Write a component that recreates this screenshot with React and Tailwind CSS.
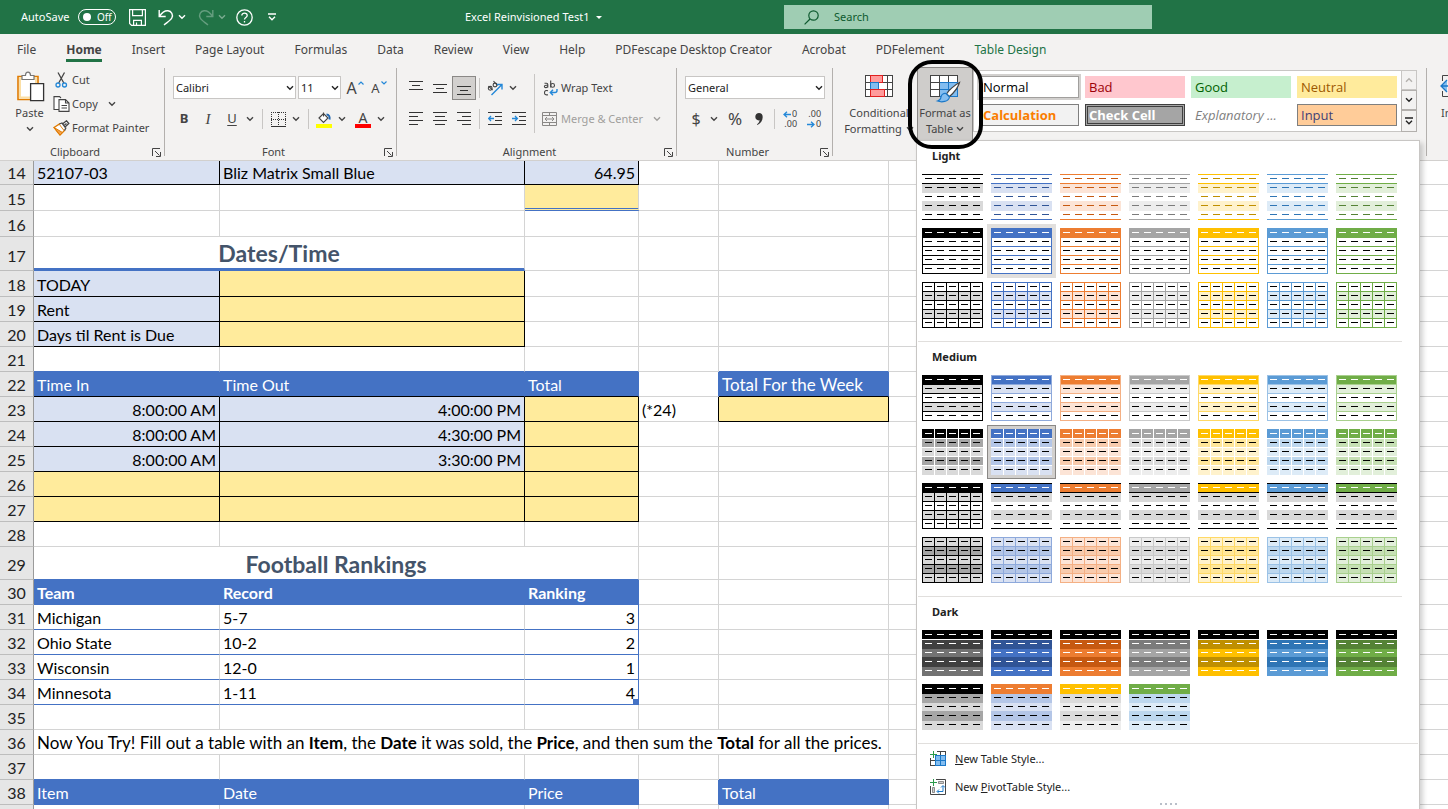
import React from "react";
import clsx from "clsx";

/* ---------- small shared pieces ---------- */

function Chevron({ className }) {
  return (
    <svg viewBox="0 0 8 6" className={clsx("h-[6px] w-2 shrink-0", className)} fill="none" stroke="currentColor" strokeWidth="1.4" aria-hidden="true">
      <path d="M1 1.2 4 4.2 7 1.2" />
    </svg>
  );
}

function IconButton({ label, active, className, children }) {
  return (
    <button
      type="button"
      aria-label={label}
      className={clsx(
        "flex h-6 w-6 shrink-0 items-center justify-center",
        active && "border border-[#8a8886] bg-[#d2d0ce]",
        className
      )}
    >
      {children}
    </button>
  );
}

function DropButton({ label, className }) {
  return (
    <button type="button" aria-label={label} className={clsx("flex h-6 w-3 shrink-0 items-center justify-center", className)}>
      <Chevron />
    </button>
  );
}

function Divider() {
  return <div className="mx-[3px] h-5 w-px shrink-0 self-center bg-[#c8c6c4]" />;
}

function Picker({ label, value, className }) {
  return (
    <div className={clsx("relative shrink-0", className)}>
      <select
        aria-label={label}
        defaultValue={value}
        className="block h-[23px] w-full appearance-none border border-[#c8c6c4] bg-white pl-[2px] text-[11px] leading-none text-[#222]"
      >
        <option>{value}</option>
      </select>
      <Chevron className="pointer-events-none absolute top-[9px] right-[2px] text-[#222]" />
    </div>
  );
}

function Group({ title, width, launcher = true, children }) {
  return (
    <section aria-label={title} className={clsx("flex shrink-0", width)}>
      <div className="flex min-w-0 grow flex-col">
        <div className="flex h-[78px] items-start">{children}</div>
        <div className="flex h-4 items-center">
          <span className="grow text-center text-[11px]">{title}</span>
          {launcher && (
            <button type="button" aria-label={title + " settings"} className="mr-[2px] flex h-3 w-3 items-center justify-center">
              <svg viewBox="0 0 9 9" className="h-[9px] w-[9px]" fill="none" stroke="#444" strokeWidth="1" aria-hidden="true">
                <path d="M.5 8V.5H8M3 3l4.5 4.5M8.5 4v4.5H4" />
              </svg>
            </button>
          )}
        </div>
      </div>
      <div className="mt-[2px] h-[88px] w-px bg-[#b3b0ad]" />
    </section>
  );
}

/* ---------- title bar ---------- */

function TitleBar() {
  return (
    <header className="flex h-[34px] shrink-0 items-center bg-[#217346] text-[11px] text-white">
      <div className="flex w-[465px] shrink-0 items-center">
        <span className="w-[57px] pl-[21px] whitespace-nowrap" id="autosave">AutoSave</span>
        <button
          type="button"
          role="switch"
          aria-checked="false"
          aria-labelledby="autosave"
          className="ml-[21px] flex h-4 w-[38px] items-center rounded-full border border-white pl-1"
        >
          <span className="h-2 w-2 rounded-full bg-white" />
          <span className="pl-[6px] text-[10px] leading-none">Off</span>
        </button>
        <button type="button" aria-label="Save" className="ml-[13px]">
          <svg viewBox="0 0 17 17" className="h-[17px] w-[17px]" fill="none" stroke="white" strokeWidth="1.2" aria-hidden="true">
            <path d="M.6.6h15.8v15.8H2.6l-2-2zM3.6.6v6h9.8v-6M4.6 16.4v-5h7.8v5M7.5 16v-2.500" />
          </svg>
        </button>
        <button type="button" aria-label="Undo" className="ml-3">
          <svg viewBox="0 0 16 17" className="h-[17px] w-4" fill="none" stroke="white" strokeWidth="1.4" aria-hidden="true">
            <path d="M1.200 1v6.500h6.500M1.500 7.200C4 3.500 7 1.500 10 1.800c3.500.3 5.500 4 3.800 7.200-1 2-3.500 3.500-7.800 7" />
          </svg>
        </button>
        <Chevron className="ml-1" />
        <button type="button" aria-label="Redo" className="ml-3 opacity-30">
          <svg viewBox="0 0 16 17" className="h-[17px] w-4" fill="none" stroke="white" strokeWidth="1.4" aria-hidden="true">
            <path d="M14.800 1v6.500H8.300M14.500 7.200C12 3.500 9 1.500 6 1.800 2.500 2.100.5 5.800 2.200 9c1 2 3.500 3.500 7.800 7" />
          </svg>
        </button>
        <Chevron className="ml-1 opacity-40" />
        <button type="button" aria-label="Help" className="ml-[10px]">
          <svg viewBox="0 0 17 17" className="h-[17px] w-[17px]" fill="none" stroke="white" strokeWidth="1.3" aria-hidden="true">
            <circle cx="8.500" cy="8.500" r="7.700" />
            <path d="M5.800 6.600c0-3.400 5.400-3.400 5.400 0 0 2-2.700 2-2.700 4M8.500 12v1.600" />
          </svg>
        </button>
        <button type="button" aria-label="Customize quick access" className="ml-[15px]">
          <svg viewBox="0 0 8 8" className="h-2 w-2" fill="none" stroke="white" strokeWidth="1.300" aria-hidden="true">
            <path d="M0 1h8M1 3.800l3 3 3-3" />
          </svg>
        </button>
      </div>
      <button type="button" className="flex w-[319px] shrink-0 items-center gap-[7px] text-[11px]">
        Excel Reinvisioned Test1
        <span className="border-x-[3px] border-t-[3px] border-x-transparent border-t-white" />
      </button>
      <label className="flex h-6 w-[368px] items-center bg-[#9fcdb3] pl-5 text-[#0e5a2f]">
        <svg viewBox="0 0 15 15" className="h-[15px] w-[15px] shrink-0" fill="none" stroke="currentColor" strokeWidth="1.2" aria-hidden="true">
          <circle cx="9.500" cy="5.500" r="4.700" />
          <path d="M6 9 .6 14.400" />
        </svg>
        <input
          type="search"
          aria-label="Search"
          placeholder="Search"
          className="ml-[15px] min-w-0 grow bg-transparent text-[11px] outline-none placeholder:text-[#0e5a2f]"
        />
      </label>
    </header>
  );
}

/* ---------- ribbon tabs ---------- */

const tabs = [
  "File", "Home", "Insert", "Page Layout", "Formulas", "Data", "Review", "View", "Help",
  "PDFescape Desktop Creator", "Acrobat", "PDFelement", "Table Design",
];

function Tabs() {
  return (
    <nav className="flex h-8 shrink-0 gap-[30px] pl-[17px] text-[12px] text-[#444]">
      {tabs.map((t) => (
        <a
          key={t}
          href="#"
          className={clsx(
            "flex h-7 items-center border-b-[3px] pt-[6px] whitespace-nowrap",
            t === "Home" ? "border-[#217346] font-bold" : "border-transparent",
            t === "Table Design" && "text-[#217346]"
          )}
        >
          {t}
        </a>
      ))}
    </nav>
  );
}

/* ---------- ribbon groups ---------- */

function Clipboard() {
  return (
    <Group title="Clipboard" width="w-[165px]">
      <button type="button" className="flex w-[45px] shrink-0 flex-col items-center pt-[5px] pl-[14px] text-[11px]">
        <svg viewBox="0 0 28 31" className="ml-[3px] h-[31px] w-7 shrink-0" fill="none" aria-hidden="true">
          <path d="M1 5.500h20v23H1z" fill="#fff" stroke="#e07b00" strokeWidth="1.600" />
          <path d="M3 7.500h16v19H3z" stroke="#fbdfa5" strokeWidth="2" />
          <path d="M5 8.500V4.500h3.500c0-4.500 5-4.500 5 0H17v4z" fill="#fff" stroke="#767676" strokeWidth="1.200" />
          <path d="M13.600 12.600h13v17h-13z" fill="#fff" stroke="#333" strokeWidth="1.300" />
        </svg>
        <span className="mt-[3px] leading-4">Paste</span>
        <Chevron className="mt-[5px]" />
      </button>
      <div className="ml-[8px] flex flex-col pt-[2px] text-[11px]">
        <button type="button" className="flex h-6 items-center">
          <svg viewBox="0 0 18 16" className="h-4 w-[18px] shrink-0" fill="none" aria-hidden="true">
            <path d="M5 .5l5.800 10.500M11.500.5 5.700 11" stroke="#444" strokeWidth="1.300" />
            <circle cx="5" cy="13" r="2" stroke="#2488d8" strokeWidth="1.300" />
            <circle cx="11.500" cy="13" r="2" stroke="#2488d8" strokeWidth="1.300" />
          </svg>
          <span className="pl-px">Cut</span>
        </button>
        <button type="button" className="flex h-6 items-center">
          <svg viewBox="0 0 18 16" className="h-4 w-[18px] shrink-0" fill="#fff" stroke="#444" strokeWidth="1.100" aria-hidden="true">
            <path d="M6 13.500H1V.6h5.500L8 2" />
            <path d="M6 3.600h6.500L16 7v8.400H6zM12.500 3.600V7H16M8.500 9.500H14M8.500 12H14" />
          </svg>
          <span className="pl-px">Copy</span>
          <Chevron className="ml-[10px]" />
        </button>
        <button type="button" className="flex h-6 items-center whitespace-nowrap">
          <svg viewBox="0 0 18 16" className="h-4 w-[18px] shrink-0" fill="none" aria-hidden="true">
            <path d="M1 7.500 6.500 4l5 6.500L7 15z" fill="#fff" stroke="#e07b00" strokeWidth="1.400" />
            <path d="M1 7.500l8.500 5L7 15z" fill="#f5a04a" stroke="#e07b00" />
            <path d="M6.500 4 9 3l3.800 5-1.300 2.500M9.500 4 13.500.8 15.800 3.500 12 7M13.500 3.500 11.500 5" stroke="#444" strokeWidth="1.300" fill="#fff" />
          </svg>
          <span className="pl-px">Format Painter</span>
        </button>
      </div>
    </Group>
  );
}

function FontGroup() {
  return (
    <Group title="Font" width="w-[232px]">
      <div className="flex flex-col gap-[7px] pt-[10px] pl-2">
        <div className="flex h-6 gap-[2px]">
          <Picker label="Font" value="Calibri" className="w-[123px]" />
          <Picker label="Font size" value="11" className="w-[43px]" />
          <div className="flex">
            <IconButton label="Increase font size" className="gap-px">
              <span className="text-[16px] leading-none">A</span>
              <svg viewBox="0 0 6 4" className="mb-[10px] h-1 w-[6px]" fill="none" stroke="#2488d8" strokeWidth="1.200" aria-hidden="true"><path d="M.5 3.500 3 1l2.500 2.500" /></svg>
            </IconButton>
            <IconButton label="Decrease font size" className="gap-px">
              <span className="text-[13px] leading-none">A</span>
              <svg viewBox="0 0 6 4" className="mb-[10px] h-1 w-[6px]" fill="none" stroke="#2488d8" strokeWidth="1.200" aria-hidden="true"><path d="M.5.5 3 3 5.500.5" /></svg>
            </IconButton>
          </div>
        </div>
        <div className="-ml-px flex h-6 text-[13px]">
          <IconButton label="Bold"><b>B</b></IconButton>
          <IconButton label="Italic"><i className="font-['Liberation_Serif',serif] text-[15px]">I</i></IconButton>
          <IconButton label="Underline"><u className="underline-offset-2">U</u></IconButton>
          <DropButton label="Underline style" />
          <div className="w-[3px]" />
          <Divider />
          <IconButton label="Borders">
            <svg viewBox="0 0 15 15" className="h-[15px] w-[15px]" stroke="#333" strokeWidth="1" shapeRendering="crispEdges" aria-hidden="true">
              <path d="M0 .5h15M0 7.500h15M.5 0v14M7.500 0v14M14.500 0v14" strokeDasharray="1 1" />
              <path d="M0 14.500h15" />
            </svg>
          </IconButton>
          <DropButton label="Border style" />
          <div className="w-[3px]" />
          <Divider />
          <IconButton label="Fill color">
            <svg viewBox="0 0 16 17" className="h-[17px] w-4" fill="none" aria-hidden="true">
              <path d="M3 7 7.500 2.500l4.500 4.500-4.500 4.500zM7.500 5.500V1.500" fill="#fff" stroke="#444" strokeWidth="1.100" />
              <path d="M10.500 3.500c2.500 0 3.500 2 3 5" stroke="#1f66b0" strokeWidth="2" />
              <path d="M0 13h16v4H0z" fill="#ff0" />
            </svg>
          </IconButton>
          <DropButton label="Fill color list" />
          <div className="w-[3px]" />
          <IconButton label="Font color">
            <span className="flex w-4 flex-col items-center border-b-4 border-[#f00] text-[14px] leading-[13px]">A</span>
          </IconButton>
          <DropButton label="Font color list" />
        </div>
      </div>
    </Group>
  );
}

function Lines({ d }) {
  return (
    <svg viewBox="0 0 14 14" className="h-[14px] w-[14px]" stroke="#333" strokeWidth="1" shapeRendering="crispEdges" aria-hidden="true">
      <path d={d} />
    </svg>
  );
}

function Alignment() {
  return (
    <Group title="Alignment" width="w-[280px]">
      <div className="flex flex-col gap-[7px] pt-[10px] pl-[7px]">
        <div className="flex h-6">
          <IconButton label="Top align"><Lines d="M0 .5h14M3 4.500h8M0 8.500h14" /></IconButton>
          <IconButton label="Middle align"><Lines d="M0 3.500h14M3 7.500h8M0 11.500h14" /></IconButton>
          <IconButton label="Bottom align" active><Lines d="M0 5.500h14M3 9.500h8M0 13.500h14" /></IconButton>
          <Divider />
          <IconButton label="Orientation">
            <svg viewBox="0 0 18 16" className="h-4 w-[18px] shrink-0" fill="none" aria-hidden="true">
              <g stroke="#444" strokeWidth="1.100">
                <circle cx="4.200" cy="8.300" r="1.900" />
                <path d="M2.500 6.200 6.600 10M7.500 1.200l4 4.300" />
                <circle cx="9" cy="5" r="1.900" />
              </g>
              <path d="M5.500 15 15.500 5M11 4.500h5v5" stroke="#2488d8" strokeWidth="1.400" />
            </svg>
          </IconButton>
          <DropButton label="Orientation list" />
        </div>
        <div className="flex h-6">
          <IconButton label="Align left"><Lines d="M0 .5h14M0 4.500h9M0 8.500h14M0 12.500h9" /></IconButton>
          <IconButton label="Center"><Lines d="M0 .5h14M2 4.500h10M0 8.500h14M2 12.500h10" /></IconButton>
          <IconButton label="Align right"><Lines d="M0 .5h14M5 4.500h9M0 8.500h14M5 12.500h9" /></IconButton>
          <Divider />
          <IconButton label="Decrease indent">
            <svg viewBox="0 0 14 14" className="h-[14px] w-[14px]" fill="none" aria-hidden="true">
              <path d="M0 .5h14M7 4.500h7M7 8.500h7M0 12.500h14" stroke="#333" shapeRendering="crispEdges" />
              <path d="M6 6.500H.8M3 4 .6 6.500 3 9" stroke="#2488d8" strokeWidth="1.300" />
            </svg>
          </IconButton>
          <IconButton label="Increase indent">
            <svg viewBox="0 0 14 14" className="h-[14px] w-[14px]" fill="none" aria-hidden="true">
              <path d="M0 .5h14M7 4.500h7M7 8.500h7M0 12.500h14" stroke="#333" shapeRendering="crispEdges" />
              <path d="M0 6.500h5.200M3 4l2.400 2.500L3 9" stroke="#2488d8" strokeWidth="1.300" />
            </svg>
          </IconButton>
        </div>
      </div>
      <div className="mt-2 mr-[7px] ml-[3px] h-[59px] w-px bg-[#c8c6c4]" />
      <div className="flex flex-col gap-[7px] pt-[10px] text-[11px] whitespace-nowrap">
        <button type="button" className="flex h-6 items-center gap-px">
          <svg viewBox="0 0 18 16" className="h-4 w-[18px] shrink-0" fill="none" aria-hidden="true">
            <g stroke="#444" strokeWidth="1.100">
              <path d="M2.500 3.200h2q1.300 0 1.300 1.300v3M5.800 5.300H4q-1.600 0-1.600 1.200T4 7.600q1.600 0 1.800-1.500M8.700.5v7" />
              <circle cx="10.600" cy="5.400" r="1.900" />
              <path d="M6 10.700q-3.500-.8-3.500 2T6 14.700" />
            </g>
            <path d="M15 9v1.500q0 2-2 2H8.500M11 9.800l-2.700 2.700 2.700 2.700" stroke="#2488d8" strokeWidth="1.400" />
          </svg>
          <span>Wrap Text</span>
        </button>
        <button type="button" className="flex h-6 items-center gap-px text-[#a19f9d]">
          <svg viewBox="0 0 18 16" className="h-4 w-[18px] shrink-0" fill="none" stroke="#8a8886" aria-hidden="true">
            <path d="M.5 1.500h14v13H.500zM.5 4.500h14M.5 11.500h14M7.500 1.500v3M7.500 11.500v3" />
            <path d="M3 8h9M5 6 3 8l2 2M10 6l2 2-2 2" />
          </svg>
          <span>Merge &amp; Center</span>
          <Chevron className="ml-[9px]" />
        </button>
      </div>
    </Group>
  );
}

function Decimals({ increase }) {
  const arrow = (
    <svg viewBox="0 0 8 7" className="h-[7px] w-2" fill="none" stroke="#2488d8" strokeWidth="1.300" aria-hidden="true">
      <path d={increase ? "M8 3.500H1M4 .7 1 3.500l3 2.800" : "M0 3.500h7M4 .7l3 2.800-3 2.800"} />
    </svg>
  );
  const zero = <span className="flex items-center justify-end gap-px">{arrow}0</span>;
  const zeros = <span className="text-right">.00</span>;
  return (
    <span className="flex flex-col text-[9px] leading-[10px]">
      {increase ? zero : zeros}
      {increase ? zeros : zero}
    </span>
  );
}

function NumberGroup() {
  return (
    <Group title="Number" width="w-[156px]">
      <div className="flex flex-col gap-[7px] pt-[10px] pl-[7px]">
        <div className="flex h-6 pl-px">
          <Picker label="Number format" value="General" className="w-[140px]" />
        </div>
        <div className="flex h-6">
          <IconButton label="Accounting format"><span className="text-[16px]">$</span></IconButton>
          <DropButton label="Accounting list" />
          <IconButton label="Percent style" className="ml-[3px]"><span className="text-[17px]">%</span></IconButton>
          <IconButton label="Comma style">
            <svg viewBox="0 0 8 12" className="h-3 w-2" fill="#333" aria-hidden="true">
              <path d="M4 0c2.300 0 3.700 1.500 3.700 4 0 3.500-2 6.500-5.200 8L2 11.300C3.500 10.300 4.500 8.800 4.600 7.300 2 7.800.3 6 .3 3.800.3 1.500 2 0 4 0z" />
            </svg>
          </IconButton>
          <Divider />
          <IconButton label="Increase decimal"><Decimals increase /></IconButton>
          <IconButton label="Decrease decimal"><Decimals /></IconButton>
        </div>
      </div>
    </Group>
  );
}

const cellStyles = [
  ["Normal", "border border-[#a19f9d] bg-white text-black outline-2 outline-[#d2d0ce]"],
  ["Bad", "border border-transparent bg-[#ffc7ce] text-[#9c0006]"],
  ["Good", "border border-transparent bg-[#c6efce] text-[#006100]"],
  ["Neutral", "border border-transparent bg-[#ffeb9c] text-[#9c5700]"],
  ["Calculation", "border border-[#7f7f7f] bg-[#f2f2f2] font-bold text-[#fa7d00]"],
  ["Check Cell", "border-3 border-double border-[#3f3f3f] bg-[#a5a5a5] pl-px! font-bold text-white"],
  ["Explanatory ...", "border border-transparent bg-white text-[#7f7f7f] italic"],
  ["Input", "border border-[#7f7f7f] bg-[#ffcc99] text-[#3f3f76]"],
];

function Styles() {
  return (
    <section aria-label="Styles" className="flex shrink-0">
      <div className="flex h-[78px] items-start pl-2">
        <button type="button" className="flex w-[76px] flex-col items-center pt-[9px] text-[11px] leading-4 whitespace-nowrap">
          <svg viewBox="0 0 28 22" className="mb-2 h-[22px] w-7 shrink-0" aria-hidden="true" shapeRendering="crispEdges">
            <path d="M.5.5h27v21H.5z" fill="#fff" stroke="#444" />
            <path d="M0 7.500h28M0 14.500h28M5.500 0v22M22.500 0v22" stroke="#444" />
            <path d="M5.500.5h12v7h-12z" fill="#ff9b9b" stroke="#e02020" />
            <path d="M5.500 7.500h8v7h-8z" fill="#83bdf0" stroke="#1b78c8" />
            <path d="M5.500 14.500h14v7h-14z" fill="#ff9b9b" stroke="#e02020" />
          </svg>
          <span>Conditional</span>
          <span className="flex items-center gap-1">Formatting <Chevron /></span>
        </button>
        <div className="relative w-14 shrink-0 pt-px">
          <button
            type="button"
            aria-haspopup="menu"
            aria-expanded="true"
            className="flex h-[74px] w-14 flex-col items-center border border-[#8a8886] bg-[#cfcdcb] pt-[7px] text-[11px] leading-4 whitespace-nowrap"
          >
            <svg viewBox="0 0 31 28" className="mb-[2px] h-7 w-[31px] shrink-0" fill="none" aria-hidden="true">
              <g shapeRendering="crispEdges">
                <path d="M.5.5h27v21H.5z" fill="#fff" stroke="#444" />
                <path d="M10 8h17v13H10z" fill="#83bdf0" />
                <path d="M0 7.500h28M0 14.500h10M9.500 0v22M18.500 0v8" stroke="#444" />
                <path d="M10 14.500h17M18.500 8v13M10 7.500h18M27.500 8v14M10 21.500h18" stroke="#1b78c8" />
              </g>
              <path d="M29.500 7.500c-5 2.500-11 8-13 11.500l3 2.500c3.500-3 8.500-9 10-14z" fill="#fff" stroke="#444" strokeWidth="1.200" />
              <path d="M16 18.500c-2.500-.5-4.500 1-5 3.500-.3 2-1.500 3.500-3.500 4 4 1.500 11 1 12-4z" fill="#83bdf0" stroke="#1b78c8" strokeWidth="1.200" />
            </svg>
            <span>Format as</span>
            <span className="flex items-center gap-[3px]">Table <Chevron /></span>
          </button>
          <TableStyleMenu />
          <div className="pointer-events-none absolute -top-[6px] -left-[9px] z-30 h-[89px] w-[75px] rounded-[24px] border-4 border-black" />
        </div>
        <div className="mt-1 flex h-[62px] border border-[#c8c6c4] bg-white">
          <div className="grid grid-cols-4 gap-[6px] py-[5px] pr-1 pl-[5px]">
            {cellStyles.map(([name, look]) => (
              <button
                key={name}
                type="button"
                className={clsx("flex h-[22px] w-[100px] items-center pl-[3px] font-['Open_Sans',sans-serif] text-[13px] leading-none whitespace-nowrap", look)}
              >
                {name}
              </button>
            ))}
          </div>
          <div className="-my-px -mr-px flex w-4 flex-col text-[#222]">
            <button type="button" aria-label="Scroll up" className="flex h-5 items-center justify-center border border-[#c8c6c4] bg-[#f3f2f1] text-[#b3b0ad]">
              <Chevron className="rotate-180" />
            </button>
            <button type="button" aria-label="Scroll down" className="flex h-5 items-center justify-center border border-[#b3b0ad] bg-[#f3f2f1]">
              <Chevron />
            </button>
            <button type="button" aria-label="More styles" className="flex h-[22px] items-center justify-center border border-[#b3b0ad] bg-[#f3f2f1]">
              <svg viewBox="0 0 8 8" className="h-2 w-2" fill="none" stroke="currentColor" strokeWidth="1.300" aria-hidden="true">
                <path d="M0 1h8M1 3.800l3 3 3-3" />
              </svg>
            </button>
          </div>
        </div>
      </div>
      <div className="mt-[2px] ml-[9px] h-[88px] w-px bg-[#b3b0ad]" />
    </section>
  );
}

function Cells() {
  return (
    <section aria-label="Cells" className="flex shrink-0 pl-[13px]">
      <button type="button" className="flex flex-col items-start pt-[9px] text-[11px] leading-4">
        <svg viewBox="0 0 28 22" className="mb-2 h-[22px] w-7" fill="none" aria-hidden="true">
          <path d="M2.500 6V.5h25M2.500 16v5.500h25" stroke="#444" />
          <path d="M7 5 1 11l6 6M1 11h14M9 7v8h18V7z" fill="#83bdf0" stroke="#1b78c8" strokeWidth="1.300" />
        </svg>
        <span className="pl-px">Insert</span>
      </button>
    </section>
  );
}

/* ---------- table style gallery ---------- */

const palette = {
  black: { main: "#000000", dark: "#000000", tint: "#d9d9d9", mid: "#a6a6a6", edge: "#000000" },
  blue: { main: "#4472c4", dark: "#305496", tint: "#d9e1f2", mid: "#b4c6e7", edge: "#8ea9db" },
  orange: { main: "#ed7d31", dark: "#c65911", tint: "#fce4d6", mid: "#f8cbad", edge: "#f4b084" },
  gray: { main: "#a5a5a5", dark: "#7b7b7b", tint: "#ededed", mid: "#dbdbdb", edge: "#c9c9c9" },
  gold: { main: "#ffc000", dark: "#bf8f00", tint: "#fff2cc", mid: "#ffe699", edge: "#ffd966" },
  sky: { main: "#5b9bd5", dark: "#2f75b5", tint: "#ddebf7", mid: "#bdd7ee", edge: "#9bc2e6" },
  green: { main: "#70ad47", dark: "#548235", tint: "#e2efda", mid: "#c6e0b4", edge: "#a9d08e" },
};
const hues = Object.keys(palette);

// Returns row fills, rule colours and dash colours for one thumbnail.
function design(kind, hue, i) {
  const p = palette[hue];
  const k = "#000000";
  const w = "#ffffff";
  switch (kind) {
    case "light1":
      return { rows: [w, p.tint, w, p.tint, w], rules: { 0: p.main, 9: p.main, 45: p.main }, head: p.dark, dash: p.dark };
    case "light2":
      return { rows: [p.main, w, w, w, w], lines: p.main, sides: p.main, head: w, dash: k };
    case "light3":
      return { rows: [w, p.tint, w, p.tint, w], lines: p.main, cols: p.main, sides: p.main, head: k, dash: k };
    case "medium1":
      return { rows: [p.main, p.tint, w, p.tint, w], lines: p.edge, sides: p.edge, head: w, dash: k };
    case "medium2":
      return { rows: [p.main, p.mid, p.tint, p.mid, p.tint], rules: { 9: w, 18: w, 27: w, 36: w }, cols: w, head: w, dash: k };
    case "medium3":
      return hue === "black"
        ? { rows: [k, p.tint, w, p.tint, w], lines: k, cols: k, sides: k, head: w, dash: k }
        : { rows: [p.main, "#d9d9d9", w, "#d9d9d9", w], rules: { 0: k, 9: k, 45: k }, head: w, dash: k };
    case "medium4":
      return { rows: [p.tint, p.mid, p.tint, p.mid, p.tint], lines: p.edge, cols: p.edge, sides: p.edge, head: k, dash: k };
    case "dark1": {
      const a = hue === "black" ? "#404040" : p.dark;
      const b = hue === "black" ? "#737373" : p.main;
      return { rows: [k, a, b, a, b], rules: { 9: w }, head: w, dash: w };
    }
    default: {
      const heads = [k, palette.orange.main, palette.gold.main, palette.green.main];
      return { rows: [heads[i], p.mid, p.tint, p.mid, p.tint], head: w, dash: k };
    }
  }
}

const bands = [[0, 10], [10, 9], [19, 8], [27, 10], [37, 9]];

function Thumb({ kind, hue, index }) {
  const d = design(kind, hue, index);
  const rules = d.lines ? { 0: d.lines, 9: d.lines, 18: d.lines, 27: d.lines, 36: d.lines, 45: d.lines } : d.rules || {};
  return (
    <svg viewBox="0 0 61 46" className="block h-[46px] w-[61px]" shapeRendering="crispEdges" aria-hidden="true">
      {bands.map(([y, h], r) => <rect key={y} x="0" y={y} width="61" height={h} fill={d.rows[r]} />)}
      {Object.entries(rules).map(([y, c]) => <rect key={y} x="0" y={y} width="61" height="1" fill={c} />)}
      {d.cols && [12, 24, 36, 48].map((x) => <rect key={x} x={x} y="0" width="1" height="46" fill={d.cols} />)}
      {d.sides && [0, 60].map((x) => <rect key={x} x={x} y="0" width="1" height="46" fill={d.sides} />)}
      {[0, 1, 2, 3, 4].map((r) =>
        [0, 1, 2, 3, 4].map((c) => (
          <rect key={r + "-" + c} x={3 + c * 12} y={4 + r * 9} width="7" height="1" fill={r === 0 ? d.head : d.dash} />
        ))
      )}
    </svg>
  );
}

const sections = [
  { title: "Light", rows: [["light1", hues], ["light2", hues], ["light3", hues]] },
  { title: "Medium", rows: [["medium1", hues], ["medium2", hues], ["medium3", hues], ["medium4", hues]] },
  { title: "Dark", rows: [["dark1", hues], ["dark2", ["black", "blue", "gray", "sky"]]] },
];

function TableStyleMenu() {
  return (
    <div role="menu" aria-label="Table styles" className="absolute top-[74px] -left-px z-20 h-[720px] w-[504px] border border-[#c8c6c4] bg-white text-[#222] shadow-[3px_3px_5px_rgba(0,0,0,0.18)]">
      {sections.map((s) => (
        <div key={s.title}>
          <h3 className="flex h-[29px] items-center pt-px pl-[15px] text-[11px] font-bold">{s.title}</h3>
          <div className={clsx("ml-px border-b border-[#e1dfdd] pb-[9px]", s.title === "Dark" ? "mr-px" : "mr-[17px]")}>
            {s.rows.map(([kind, list]) => (
              <div key={kind} className="flex">
                {list.map((hue, i) => (
                  <button
                    key={hue}
                    type="button"
                    role="menuitem"
                    aria-label={s.title + " " + kind + " " + hue}
                    className={clsx(
                      "flex h-[54px] w-[69px] items-center justify-center border",
                      hue === "blue" && kind === "medium2"
                        ? "border-[#8a8886] bg-[#d2d0ce]"
                        : hue === "blue" && kind === "light2"
                        ? "border-[#e1dfdd] bg-[#e1dfdd]"
                        : "border-transparent"
                    )}
                  >
                    <Thumb kind={kind} hue={hue} index={i} />
                  </button>
                ))}
              </div>
            ))}
          </div>
        </div>
      ))}
      <div className="flex flex-col pt-px text-[11px]">
        <button type="button" role="menuitem" className="flex h-7 items-center gap-[9px] pl-[13px]">
          <svg viewBox="0 0 16 16" className="h-4 w-4" fill="none" shapeRendering="crispEdges" aria-hidden="true">
            <path d="M7 .5h8.500V5M.5 7v7.500H5M10.500.5V5M.5 9.500H5" stroke="#444" />
            <path d="M5.500 4.500h10v10h-10z" fill="#83bdf0" stroke="#1b78c8" />
            <path d="M5.500 9.500h10M10.500 4.500v10" stroke="#1b78c8" />
            <path d="M3.500 0v7M0 3.500h7" stroke="#2c9a4b" />
          </svg>
          <span><u>N</u>ew Table Style...</span>
        </button>
        <button type="button" role="menuitem" className="flex h-7 items-center gap-[9px] pl-[13px]">
          <svg viewBox="0 0 16 16" className="h-4 w-4" fill="none" aria-hidden="true">
            <path d="M6 .5h9.500v15H.5V7" stroke="#444" />
            <path d="M8.500 2.500h5v2h-5zM2.500 8.500h2v5h-2z" fill="#ccc" stroke="#777" strokeWidth=".8" />
            <path d="M7.500 12.500h5.500V7M9 10.500l-2 2 2 2M11 8.500l2-2 2 2" stroke="#1b78c8" />
            <path d="M3.500 0v7M0 3.500h7" stroke="#2c9a4b" />
          </svg>
          <span>New <u>P</u>ivotTable Style...</span>
        </button>
        <div className="mt-[2px] flex justify-center gap-[3px]">
          {[0, 1, 2, 3].map((n) => <span key={n} className="h-[2px] w-[2px] bg-[#b9bfc9]" />)}
        </div>
      </div>
    </div>
  );
}

/* ---------- worksheet ---------- */

const look = {
  plain: "border-r-[#d4d4d4] border-b-[#d4d4d4]",
  note: "border-r-[#d4d4d4] border-b-[#d4d4d4] text-[17px]",
  above: "border-r-[#d4d4d4] border-b-[#4472c4]",
  pale: "border-r-black border-b-black bg-[#d9e1f2]",
  paleR: "border-r-black border-b-black bg-[#d9e1f2] text-right",
  input: "border-r-black border-b-black bg-[#ffeb9c]",
  head: "border-r-[#4472c4] border-b-black bg-[#4472c4] text-white",
  headWide: "border-r-[#4472c4] border-b-black bg-[#4472c4] text-[17px] text-white",
  blue: "border-r-[#4472c4] border-b-[#4472c4] bg-[#4472c4] text-white",
  blueB: "border-r-[#4472c4] border-b-[#4472c4] bg-[#4472c4] text-white font-bold",
  item: "border-r-[#d4d4d4] border-b-[#4472c4]",
  rank: "border-r-[#4472c4] border-b-[#4472c4] text-right",
  rankEnd: "relative border-r-[#4472c4] border-b-[#4472c4] text-right after:absolute after:right-0 after:bottom-0 after:h-[5px] after:w-[5px] after:bg-[#4472c4] after:content-['']",
  sum: "border-r-[#d4d4d4] border-b-[3px] border-double border-b-[#4472c4] bg-[#ffeb9c]",
  titleLine: "border-r-[#d4d4d4] border-b-[3px] border-b-[#4472c4] text-center text-[23px] font-bold text-[#44546a]",
  title: "border-r-[#d4d4d4] border-b-[#4472c4] text-center text-[23px] font-bold text-[#44546a]",
  leftBlue: "border-r-[#4472c4] border-b-[#d4d4d4]",
  leftBlack: "border-r-black border-b-[#d4d4d4]",
};

const P = ["", "plain"];
const rows = [
  [14, "h-6", [["52107-03", "pale"], ["Bliz Matrix Small Blue", "pale"], ["64.95", "paleR"], P, P]],
  [15, "h-[26px]", [P, P, ["", "sum"], P, P]],
  [16, "h-[26px]", [P, P, P, P, P]],
  [17, "h-[34px]", [["Dates/Time", "titleLine", 2], P, P, P]],
  [18, "h-[26px]", [["TODAY", "pale"], ["", "input"], P, P, P]],
  [19, "h-[25px]", [["Rent", "pale"], ["", "input"], P, P, P]],
  [20, "h-[25px]", [["Days til Rent is Due", "pale"], ["", "input"], P, P, P]],
  [21, "h-[25px]", [["", "above"], ["", "above"], ["", "above"], P, ["", "above"]]],
  [22, "h-[25px]", [["Time In", "head"], ["Time Out", "head"], ["Total", "head"], ["", "leftBlue"], ["Total For the Week", "headWide"]]],
  [23, "h-[25px]", [["8:00:00 AM", "paleR"], ["4:00:00 PM", "paleR"], ["", "input"], ["(*24)", "leftBlack"], ["", "input"]]],
  [24, "h-[25px]", [["8:00:00 AM", "paleR"], ["4:30:00 PM", "paleR"], ["", "input"], P, P]],
  [25, "h-[25px]", [["8:00:00 AM", "paleR"], ["3:30:00 PM", "paleR"], ["", "input"], P, P]],
  [26, "h-[25px]", [["", "input"], ["", "input"], ["", "input"], P, P]],
  [27, "h-[25px]", [["", "input"], ["", "input"], ["", "input"], P, P]],
  [28, "h-[25px]", [P, P, P, P, P]],
  [29, "h-[33px]", [["Football Rankings", "title", 3], P, P]],
  [30, "h-[25px]", [["Team", "blueB"], ["Record", "blueB"], ["Ranking", "blueB"], P, P]],
  [31, "h-[25px]", [["Michigan", "item"], ["5-7", "item"], ["3", "rank"], P, P]],
  [32, "h-[25px]", [["Ohio State", "item"], ["10-2", "item"], ["2", "rank"], P, P]],
  [33, "h-[25px]", [["Wisconsin", "item"], ["12-0", "item"], ["1", "rank"], P, P]],
  [34, "h-[25px]", [["Minnesota", "item"], ["1-11", "item"], ["4", "rankEnd"], P, P]],
  [35, "h-[25px]", [P, P, P, P, P]],
  [36, "h-[25px]", [[
    <>Now You Try! Fill out a table with an <b>Item</b>, the <b>Date</b> it was sold, the <b>Price</b>, and then sum the <b>Total</b> for all the prices.</>,
    "note", 5]]],
  [37, "h-[25px]", [["", "above"], ["", "above"], ["", "above"], P, ["", "above"]]],
  [38, "h-[25px]", [["Item", "blue"], ["Date", "blue"], ["Price", "blue"], ["", "leftBlue"], ["Total", "blue"]]],
  ["", "h-[25px]", [P, P, P, P, P]],
];

function Sheet() {
  return (
    <main className="min-h-0 grow overflow-hidden bg-white font-[Lato,'Liberation_Sans',sans-serif] text-[16px] leading-[22px] text-black">
      <table className="w-full table-fixed border-separate border-spacing-0">
        <colgroup>
          <col className="w-[34px]" />
          <col className="w-[186px]" />
          <col className="w-[305px]" />
          <col className="w-[114px]" />
          <col className="w-[80px]" />
          <col className="w-[170px]" />
          <col />
        </colgroup>
        <tbody>
          {rows.map(([n, h, cells]) => {
            const tall = n === 17 || n === 29;
            return (
              <tr key={n}>
                <th
                  scope="row"
                  className={clsx(
                    "border-r border-b border-r-[#9b9b9b] border-b-[#bdbdbd] bg-[#e6e6e6] px-0 pt-0 text-center align-bottom font-normal text-[#222]",
                    tall ? "pb-[3px]" : "pb-0",
                    h
                  )}
                >
                  {n}
                </th>
                {cells.map(([text, kind, span], i) => (
                  <td
                    key={i}
                    colSpan={span}
                    className={clsx("border-r border-b px-[3px] pt-0 align-bottom whitespace-nowrap", tall ? "pb-1" : "pb-0", look[kind])}
                  >
                    {text}
                  </td>
                ))}
                <td className="border-b border-b-[#d4d4d4] p-0" />
              </tr>
            );
          })}
        </tbody>
      </table>
    </main>
  );
}

export default function App() {
  return (
    <div className="flex h-screen flex-col overflow-hidden bg-[#f3f2f1] font-['Noto_Sans','Open_Sans',sans-serif] text-[#444]">
      <TitleBar />
      <Tabs />
      <div className="flex h-[95px] shrink-0 border-b border-[#d2d0ce]">
        <Clipboard />
        <FontGroup />
        <Alignment />
        <NumberGroup />
        <Styles />
        <Cells />
      </div>
      <Sheet />
    </div>
  );
}
